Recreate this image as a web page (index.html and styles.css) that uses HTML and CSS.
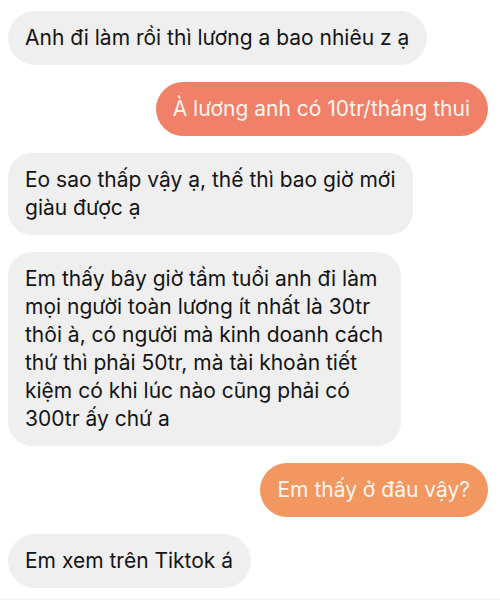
FILE: index.html
```html
<!DOCTYPE html>
<html lang="vi">
<head>
<meta charset="utf-8">
<link rel="stylesheet" href="styles.css">
</head>
<body>
<div class="chat">
  <div class="msg in">Anh đi làm rồi thì lương a bao nhiêu z ạ</div>
  <div class="msg out coral">À lương anh có 10tr/tháng thui</div>
  <div class="msg in multi">Eo sao thấp vậy ạ, thế thì bao giờ mới<br>giàu được ạ</div>
  <div class="msg in multi">Em thấy bây giờ tầm tuổi anh đi làm<br>mọi người toàn lương ít nhất là 30tr<br>thôi à, có người mà kinh doanh cách<br>thứ thì phải 50tr, mà tài khoản tiết<br>kiệm có khi lúc nào cũng phải có<br>300tr ấy chứ a</div>
  <div class="msg out orange">Em thấy ở đâu vậy?</div>
  <div class="msg in">Em xem trên Tiktok á</div>
</div>
</body>
</html>
```
FILE: styles.css
```css
html, body {
  margin: 0;
  padding: 0;
  background: #ffffff;
}
.chat {
  width: 500px;
  height: 600px;
  box-sizing: border-box;
  padding: 11px 12px 0 8px;
  display: flex;
  flex-direction: column;
  align-items: flex-start;
  gap: 17px;
  font-family: Inter, "Noto Sans", sans-serif;
  font-size: 21px;
  line-height: 28px;
  border-bottom: 1px solid #f3f3f3;
}
.msg {
  padding: 13px 18px 13px 17px;
  border-radius: 27px;
  white-space: nowrap;
}
.msg.multi {
  border-radius: 24px;
}
.in {
  background: #efefef;
  color: #141414;
}
.out {
  align-self: flex-end;
  color: #fff6f2;
}
.coral {
  background: #f08068;
}
.orange {
  background: #f2975f;
}
```
